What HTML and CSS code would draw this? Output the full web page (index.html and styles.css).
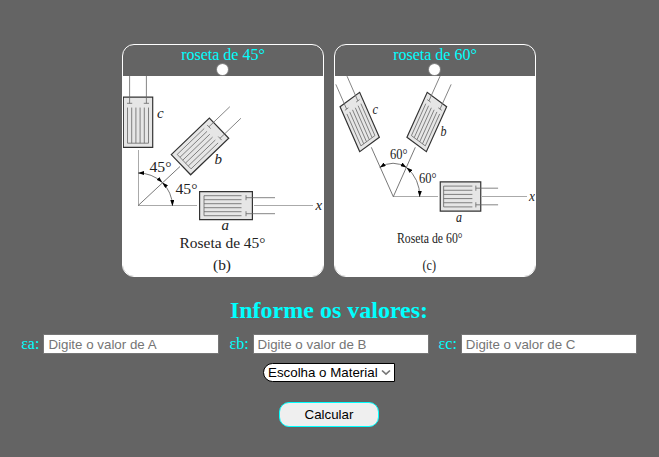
FILE: index.html
```html
<!DOCTYPE html>
<html lang="pt-BR">
<head>
<meta charset="utf-8">
<title>Roseta</title>
<link rel="stylesheet" href="styles.css">
</head>
<body>
<svg class="defs" aria-hidden="true">
  <defs>
    <g id="gauge">
      <rect class="plate" x="-26.4" y="-14" width="52.8" height="28"/>
      <path class="grid-line" d="M15.5-10H-22V10H15.5M-22-6H15.5M-22-2H15.5M-22 2H15.5M-22 6H15.5"/>
      <path class="grid-line" d="M20-10.5V-5.5M20 5.5V10.5M20-8H49M20 8H49"/>
    </g>
    <marker id="arrow" viewBox="0 0 6 4" refX="6" refY="2" markerWidth="6" markerHeight="4" markerUnits="userSpaceOnUse" orient="auto-start-reverse"><path d="M0 0L6 2L0 4Z"/></marker>
  </defs>
</svg>
<form class="page">
  <div class="cards">
    <div class="card">
      <label class="title" for="r45">roseta de 45°</label>
      <input class="radio" type="radio" name="roseta" id="r45">
      <svg class="diagram" viewBox="123 76 200 200">
        <path class="axis" d="M138.5 150V205.5H197M254 205.5H313"/>
        <path class="thin" d="M138 205.7L180 166.5"/>
        <path class="thin" marker-start="url(#arrow)" marker-end="url(#arrow)" d="M138 173Q152 173 162.3 182.5"/>
        <path class="thin" marker-start="url(#arrow)" marker-end="url(#arrow)" d="M162.3 182.5Q172 192 172.5 206"/>
        <use href="#gauge" transform="translate(226 205.7)"/>
        <use href="#gauge" transform="translate(200 146.4) rotate(-43.8)"/>
        <use href="#gauge" transform="translate(138 122.3) rotate(-90) scale(.95 1.05)"/>
        <text class="var" x="157" y="118">c</text>
        <text class="var" x="214.5" y="163.5">b</text>
        <text class="var" x="221.5" y="230">a</text>
        <text class="var" x="315.5" y="209.5">x</text>
        <text x="149.5" y="172" textLength="22" lengthAdjust="spacingAndGlyphs">45°</text>
        <text x="175.5" y="194" textLength="22" lengthAdjust="spacingAndGlyphs">45°</text>
        <text x="179.5" y="248" textLength="86" lengthAdjust="spacingAndGlyphs">Roseta de 45°</text>
        <text x="213" y="270" textLength="18" lengthAdjust="spacingAndGlyphs">(b)</text>
      </svg>
    </div>
    <div class="card">
      <label class="title" for="r60">roseta de 60°</label>
      <input class="radio" type="radio" name="roseta" id="r60">
      <svg class="diagram" viewBox="335 76 200 200">
        <path class="axis" d="M393.3 196.5H438M482 196.5H527"/>
        <path class="thin" d="M371.3 147.3L393.3 196.7L415.3 147.3"/>
        <path class="thin" marker-start="url(#arrow)" marker-end="url(#arrow)" d="M379.7 167.5Q393 159 406.5 167.5"/>
        <path class="thin" marker-start="url(#arrow)" marker-end="url(#arrow)" d="M406.5 167.5Q420 179 419.7 197"/>
        <use href="#gauge" transform="translate(460.5 196.5) scale(.767 1.04)"/>
        <use href="#gauge" transform="matrix(.384 -.852 .693 .514 426.8 122)"/>
        <use href="#gauge" transform="matrix(-.373 -.852 .7 -.514 359.7 122)"/>
        <text class="var" x="372.5" y="113.5" textLength="5.5" lengthAdjust="spacingAndGlyphs">c</text>
        <text class="var" x="440.5" y="135.5" textLength="6" lengthAdjust="spacingAndGlyphs">b</text>
        <text class="var" x="456" y="222" textLength="6" lengthAdjust="spacingAndGlyphs">a</text>
        <text class="var" x="529" y="200.5" textLength="6" lengthAdjust="spacingAndGlyphs">x</text>
        <text x="390" y="158.5" textLength="17.5" lengthAdjust="spacingAndGlyphs">60°</text>
        <text x="419" y="182.5" textLength="17.5" lengthAdjust="spacingAndGlyphs">60°</text>
        <text x="397" y="242.5" textLength="65.5" lengthAdjust="spacingAndGlyphs">Roseta de 60°</text>
        <text x="422.5" y="269.5" textLength="13.5" lengthAdjust="spacingAndGlyphs">(c)</text>
      </svg>
    </div>
  </div>
  <h2 class="heading">Informe os valores:</h2>
  <div class="fields">
    <label class="field"><span class="symbol">εa:</span><input class="value" type="text" placeholder="Digite o valor de A"></label>
    <label class="field"><span class="symbol">εb:</span><input class="value" type="text" placeholder="Digite o valor de B"></label>
    <label class="field"><span class="symbol">εc:</span><input class="value" type="text" placeholder="Digite o valor de C"></label>
  </div>
  <select class="material"><option>Escolha o Material</option></select>
  <button class="submit" type="button">Calcular</button>
</form>
</body>
</html>
```
FILE: styles.css
```css
* { box-sizing: border-box; }
body {
  margin: 0;
  background: #646464;
  color: #0ff;
  font: 16px/18px "Liberation Serif", serif;
}
.defs { display: block; width: 0; height: 0; }
.page {
  display: flex;
  flex-direction: column;
  align-items: center;
  padding: 44px 1px 0 0;
}
.cards { display: flex; gap: 10px; }
.card {
  display: flex;
  flex-direction: column;
  align-items: center;
  width: 202px;
  height: 233px;
  border: 1px solid #fff;
  border-radius: 12px;
  overflow: hidden;
}
.title { height: 19px; line-height: 19px; }
.radio {
  appearance: none;
  width: 11px;
  height: 11px;
  margin: 0 1px 1px 0;
  border-radius: 50%;
  background: #fff;
  box-shadow: 0 0 0 1px #858585;
}
.diagram {
  display: block;
  width: 200px;
  height: 200px;
  flex: none;
  background: #fff;
  font: 15px "Liberation Serif", serif;
}
.diagram text { fill: #222; }
.var { font-style: italic; }
.plate { fill: #e6e6e6; stroke: #333; stroke-width: 1.2; vector-effect: non-scaling-stroke; }
.grid-line { fill: none; stroke: #666; stroke-width: .8; vector-effect: non-scaling-stroke; }
.axis { fill: none; stroke: #aaa; stroke-width: 1; }
.thin { fill: none; stroke: #555; stroke-width: .8; }
.heading {
  margin: 19px 0 10px;
  font-size: 24px;
  line-height: 28px;
}
.fields { display: flex; gap: 10px; }
.field { display: flex; align-items: center; gap: 4px; }
.symbol { white-space: nowrap; }
.value {
  width: 176px;
  height: 20px;
  padding: 1px 4px;
  border: 1px solid #767676;
  background: #fff;
  font: 13.333px "Liberation Sans", sans-serif;
}
.value::placeholder { color: #757575; }
.material {
  appearance: none;
  width: 132px;
  height: 19px;
  margin-top: 9px;
  padding: 0 4px;
  border: 1px solid #000;
  border-radius: 10px 0 0 10px;
  color: #000;
  font: 13.333px "Liberation Sans", sans-serif;
  background: #fff url("data:image/svg+xml,%3Csvg xmlns='http://www.w3.org/2000/svg' width='10' height='7'%3E%3Cpath d='M1 1.5L5 5.2L9 1.5' fill='none' stroke='%23777' stroke-width='1.7'/%3E%3C/svg%3E") no-repeat right 3px center;
}
.submit {
  width: 100px;
  height: 25px;
  margin-top: 20px;
  padding: 0;
  border: 1px solid #0ff;
  border-radius: 10px;
  background: #efefef;
  color: #000;
  font: 13.333px "Liberation Sans", sans-serif;
}
```
